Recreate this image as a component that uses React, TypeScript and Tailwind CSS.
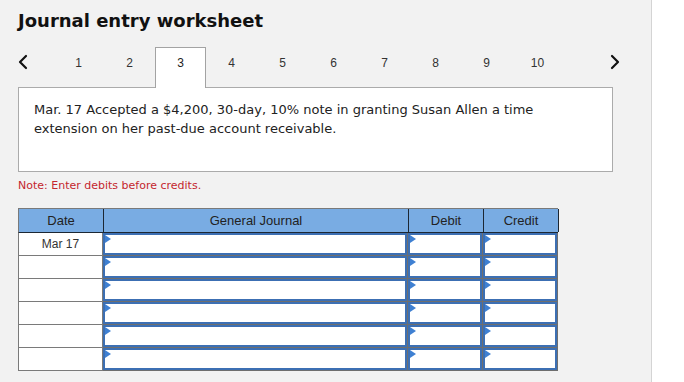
import React, { JSX } from 'react';

const tabs = [1, 2, 3, 4, 5, 6, 7, 8, 9, 10];
const rows = ['Mar 17', '', '', '', '', ''];

function Chevron({ dir }: { dir: 'left' | 'right' }): JSX.Element {
    return (
        <svg width="10" height="16" viewBox="0 0 10 16" fill="none">
            <path
                d={dir === 'left' ? 'M8 2 L2 8 L8 14' : 'M2 2 L8 8 L2 14'}
                stroke="#111"
                strokeWidth="2.2"
                strokeLinecap="round"
                strokeLinejoin="round"
            />
        </svg>
    );
}

function EntryCell(): JSX.Element {
    return (
        <div className="h-[23px] border-r border-b border-[#6e6e6e]">
            <div className="relative h-full bg-white border-2 border-[#3c6fb3]">
                <span className="absolute top-0 left-0 w-0 h-0 border-y-[4px] border-y-transparent border-l-[6px] border-l-[#3f80d2]" />
            </div>
        </div>
    );
}

export default function App(): JSX.Element {
    return (
        <div className="flex min-h-[382px] bg-white">
            <div className="w-[652px] min-h-[382px] bg-[#f2f2f2] border-r border-[#d4d4d4] pl-[18px] pt-[10px]">
                <h1 className="text-[18px] leading-[22px] font-bold text-[#111] font-['DejaVu_Sans',sans-serif]">
                    Journal entry worksheet
                </h1>

                {/* step tabs */}
                <div className="relative z-10 mt-[15px] flex items-start w-[602px] -mb-px">
                    <div className="w-[35px] h-[30px] flex items-center">
                        <Chevron dir="left" />
                    </div>
                    {tabs.map((n) => (
                        <div
                            key={n}
                            className={
                                n === 3
                                    ? 'w-[51px] h-[41px] bg-white border-t border-x border-[#a3a3a3] text-center pt-[7px] text-[12px] leading-[16px] text-[#222] font-["Liberation_Sans",sans-serif]'
                                    : 'w-[51px] h-[41px] border-t border-x border-transparent text-center pt-[7px] text-[12px] leading-[16px] text-[#333] font-["Liberation_Sans",sans-serif]'
                            }
                        >
                            {n}
                        </div>
                    ))}
                    <div className="flex-1 h-[30px] flex items-center justify-end">
                        <Chevron dir="right" />
                    </div>
                </div>

                {/* transaction box */}
                <div className="w-[595px] h-[85px] bg-white border border-[#ababab] pl-[15px] pt-[12px] text-[13px] leading-[19px] text-[#222] font-['DejaVu_Sans',sans-serif]">
                    <p className="w-[530px]">
                        Mar. 17 Accepted a $4,200, 30-day, 10% note in granting Susan Allen a time extension on her past-due account receivable.
                    </p>
                </div>

                <p className="mt-[7px] text-[11px] leading-[14px] text-[#c4262e] font-['DejaVu_Sans',sans-serif]">
                    Note: Enter debits before credits.
                </p>

                {/* journal table */}
                <div className="mt-[15px] w-[540px] font-['Liberation_Sans',sans-serif]">
                    <div className="grid grid-cols-[85px_305px_75px_75px] h-[25px] border-t border-l border-[#7a7a7a] border-b border-b-[#1c2733] bg-[#79ace3] text-[13px] text-[#222]">
                        <div className="flex items-center justify-center border-r border-[#1c2733]">Date</div>
                        <div className="flex items-center justify-center border-r border-[#1c2733]">General Journal</div>
                        <div className="flex items-center justify-center border-r border-[#1c2733]">Debit</div>
                        <div className="flex items-center justify-center border-r border-[#1c2733]">Credit</div>
                    </div>
                    {rows.map((date, i) => (
                        <div key={i} className="grid grid-cols-[85px_305px_75px_75px]">
                            <div className="h-[23px] bg-white border-l border-r border-b border-[#7a7a7a] flex items-center justify-center text-[12px] text-[#333]">
                                {date}
                            </div>
                            <EntryCell />
                            <EntryCell />
                            <EntryCell />
                        </div>
                    ))}
                </div>
            </div>
        </div>
    );
}
